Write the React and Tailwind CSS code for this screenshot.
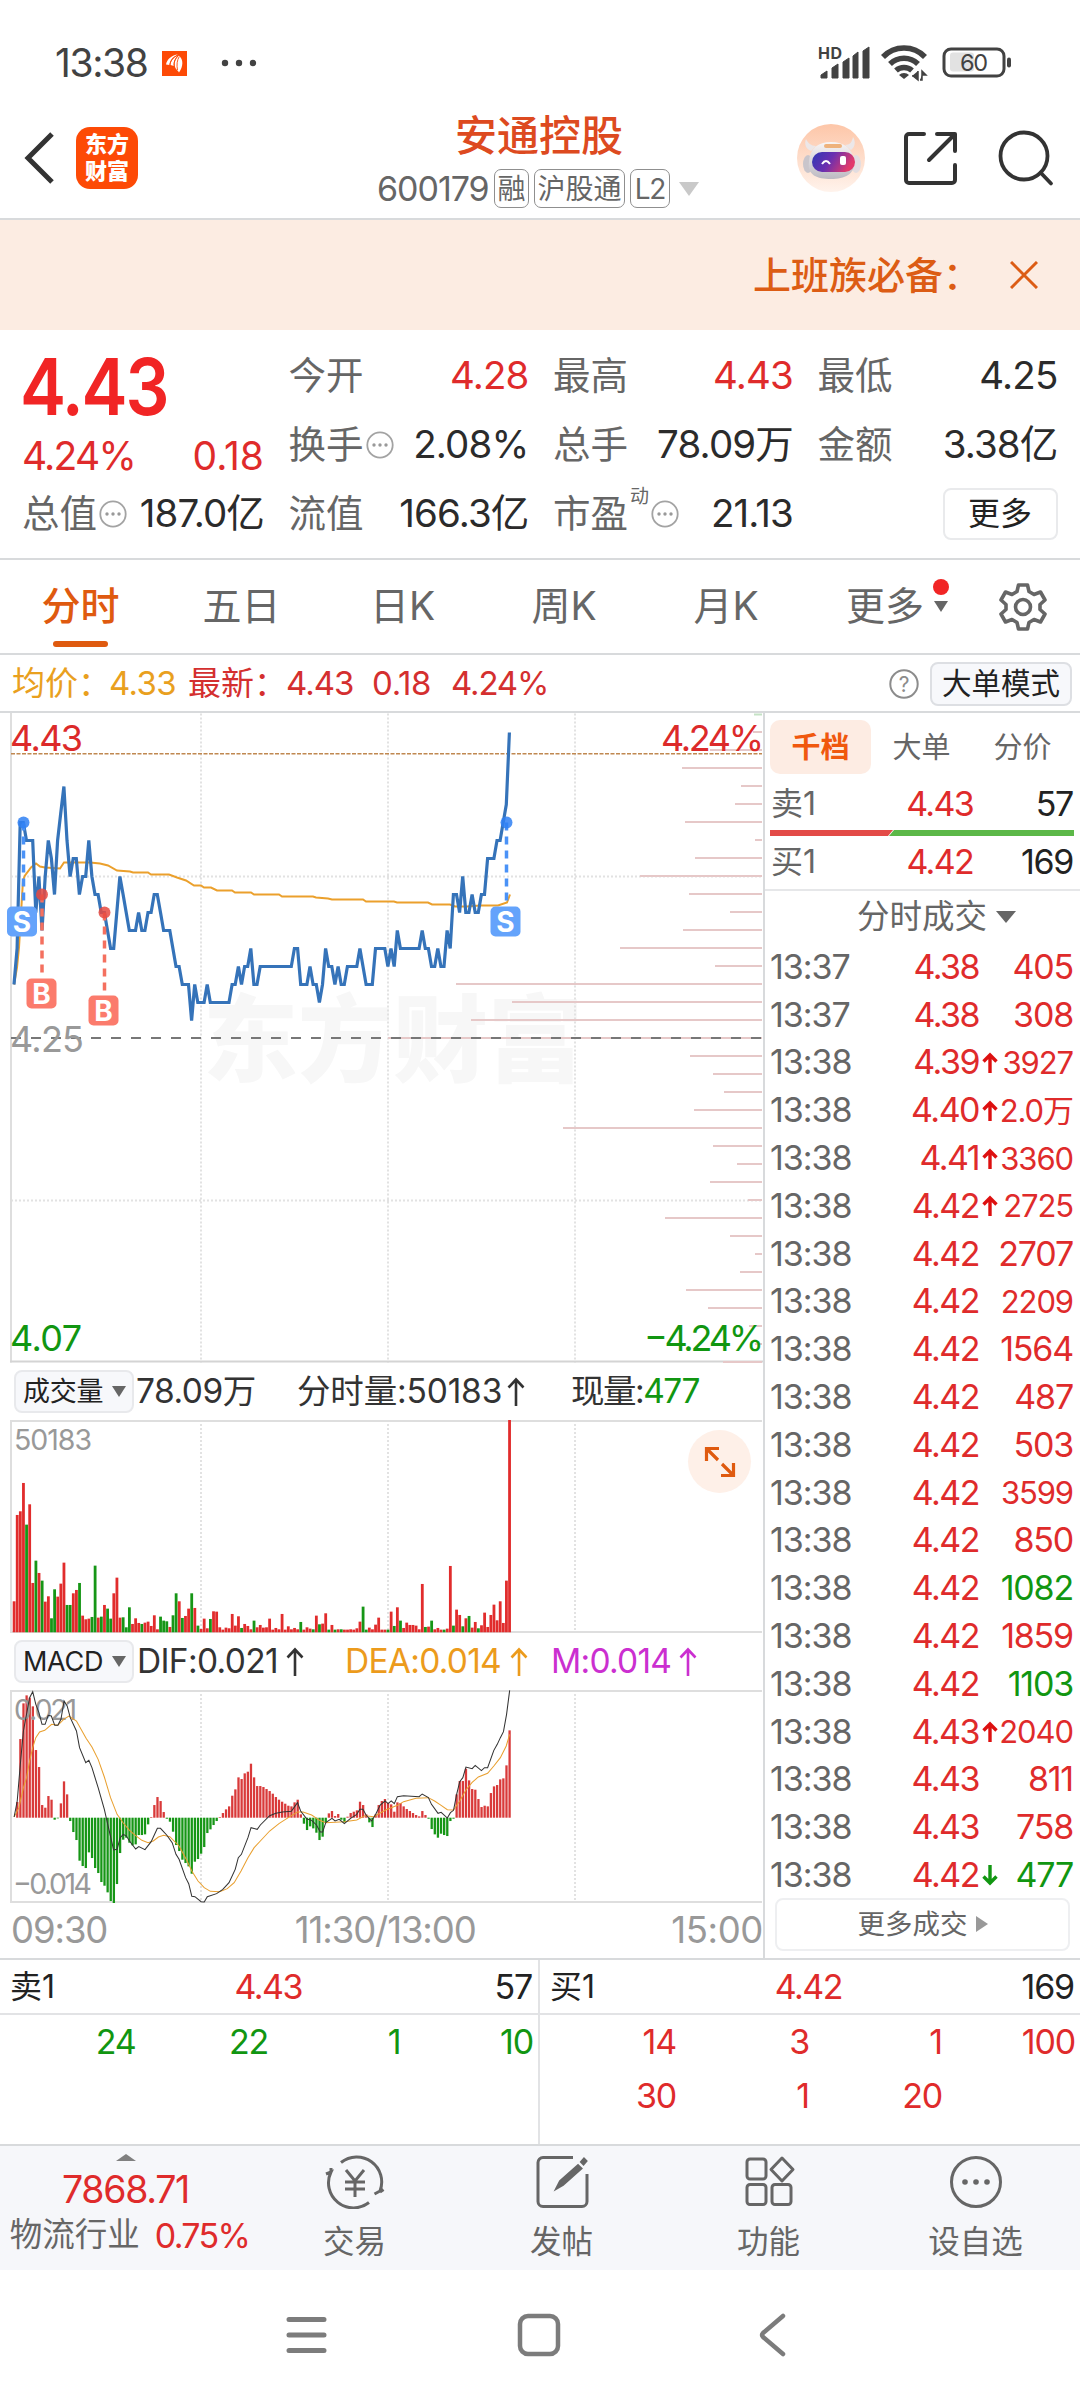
// ticks above 4.25, one per minute
const price = [
  3, 5, 12, 12, 11, 11, 11, 7, 9, 6, 9, 11, 10, 8, 11, 12.5, 14, 11, 9, 10, 10, 8, 9, 9, 11, 9, 8, 8, 7, 7, 6, 5, 5, 7, 9, 8, 7, 6, 6, 6,
  7, 6, 6, 7, 7, 8, 8, 7, 6, 6, 6, 5, 4, 4, 3, 3, 3, 1, 3, 2, 2, 2, 3, 2, 2, 2, 2, 2, 2, 2, 3, 3, 4, 3, 4, 4, 5, 3, 3, 4,
  4, 4, 4, 4, 4, 4, 4, 4, 4, 4, 5, 5, 3, 3, 3, 4, 3, 3, 2, 3, 5, 4, 4, 3, 4, 3, 3, 4, 4, 4, 4, 5, 4, 3, 3, 3, 5, 5, 5, 5,
  4, 5, 4, 6, 5, 5, 5, 5, 5, 5, 5, 6, 5, 5, 4, 4, 5, 4, 4, 6, 5, 8, 8, 7, 9, 7, 7, 8, 7, 7, 8, 8, 10, 10, 10, 11, 11, 13, 17,
];

const average =
  "14,984 17,967 19,947 21,913 23,880 25,875 31,867 36,863 40,866 45,867 60,868 64,862 90,862 100,863 108,865 117,870 130,871 133,872 148,872 151,874 169,874 177,877 186,880 194,885 201,885 204,887 211,887 217,890 232,890 235,892 251,892 254,894 279,894 282,896 313,896 316,897 328,898 332,899 363,899 366,901 394,901 397,902 428,902 432,904 450,904 455,906 467,906 480,905 498,905 507,902 510,894";

// negative = falling minute (green)
const volume = [
  93, 352, 363, 448, -323, 384, 148, -215, 178, -155, 92, 108, -42, -129, 107, 146, 209, -82, -82, 117, 127, -148, 50, 39, 41, -46, -200, 44, -47, 82,
  -71, -41, 117, 164, 44, -45, -15, -75, 25, 42, 28, -25, 29, 32, 19, 51, 9, -47, -35, -33, 16, -51, -117, 93, -43, 49, 71, -117, 73, -20,
  10, 41, 12, -40, 63, 62, 15, 8, 14, 12, 55, 20, 48, -13, 25, 19, 9, -35, 15, 22, 14, 15, 41, 8, 13, 9, 55, 8, 18, 9,
  13, 9, -31, 8, 15, 11, -9, 50, -24, 26, 57, -8, 22, -8, 9, -9, 8, 8, 9, 8, 12, 32, -77, -8, 14, 9, 23, 44, 8, 8,
  -8, 62, -19, 75, -35, 13, 29, 22, 22, 20, 9, 145, -16, 17, -35, 9, 13, 8, -8, 11, 199, -20, 68, 52, -18, 42, -49, 14, 31, -12,
  21, 59, 16, 52, 83, 36, 93, 28, 155, 637,
];

const macd = [
  0, 47, 236, 343, 367, 360, 334, 203, 152, 38, 30, 65, 54, -6, -2, 43, 109, 70, -10, -43, -67, -129, -145, -151, -104, -121, -151, -166, -193, -204,
  -224, -250, -256, -199, -106, -66, -60, -75, -83, -80, -52, -52, -50, -20, 2, 38, 62, 50, 17, -3, -12, -42, -82, -100, -126, -136, -146, -168, -132, -124,
  -108, -88, -46, -35, -22, -10, 2, 14, 25, 34, 66, 85, 121, 116, 133, 138, 162, 121, 95, 95, 92, 86, 80, 72, 62, 54, 48, 42, 36, 34,
  46, 54, 10, -18, -37, -26, -32, -45, -67, -57, -15, 13, 20, 5, 11, -6, -14, 3, 14, 18, 22, 48, 38, 10, -14, -28, 10, 38, 50, 56,
  44, 40, 18, 46, 44, 34, 26, 20, 14, 8, 4, 20, 8, -3, -34, -50, -60, -48, -52, -55, -10, -3, 70, 110, 110, 147, 112, 86, 84, 56,
  32, 36, 34, 74, 94, 98, 115, 118, 157, 262,
];

const dif =
  "41,588 50,540 59,430 68,330 77,280 86,230 95,212 104,250 113,275 122,310 131,310 140,283 149,285 159,313 168,313 177,295 186,240 195,255 204,290 222,330 231,380 249,425 258,418 267,440 285,500 303,565 315,620 330,687 340,685 349,650 358,640 367,645 376,660 394,684 403,677 421,686 439,662 457,622 466,622 484,642 500,665 511,700 520,715 539,770 548,788 557,826 566,827 584,842 593,843 602,827 629,818 647,805 665,785 683,745 692,710 701,700 720,650 729,620 747,625 756,612 783,584 801,577 820,573 846,571 864,545 873,570 891,594 905,598 919,612 930,633 937,633 946,605 964,592 973,600 985,595 1000,608 1018,592 1036,580 1045,565 1054,565 1063,582 1079,600 1091,580 1104,552 1118,540 1127,548 1136,540 1145,548 1154,527 1172,524 1217,527 1226,519 1244,530 1253,550 1272,577 1281,574 1299,591 1308,575 1317,568 1326,520 1335,482 1344,470 1353,438 1371,443 1380,433 1398,449 1407,440 1416,440 1434,388 1444,370 1453,350 1462,332 1471,280 1480,208";
const dea =
  "41,588 55,560 68,500 77,470 86,420 95,380 104,350 115,333 130,328 150,310 168,313 185,295 200,285 222,300 250,352 267,378 285,415 303,468 321,530 340,580 358,606 376,628 394,644 412,658 430,665 445,660 460,648 475,643 493,647 520,675 540,713 557,750 575,780 593,800 611,811 638,812 660,803 680,785 700,750 720,710 738,680 756,660 783,630 810,608 837,590 864,573 880,573 905,582 928,598 946,605 1000,602 1036,597 1060,584 1085,587 1120,567 1154,553 1172,542 1208,532 1244,530 1262,540 1281,553 1299,566 1317,567 1335,540 1353,507 1371,484 1389,468 1416,457 1434,435 1453,410 1470,375 1480,340";

// left ends of the volume-by-price lines, top to bottom
const levels = [
  753, 710, 682, 741, 735, 685, 755, 695, 640, 689, 730, 683, 620, 715, 456, 512, 471, 388, 690, 713, 724, 694, 563, 713, 737, 710, 748, 665, 730, 755, 740, 686, 708, 749, 755, 723,
];

const trades = [
  ["13:37", "4.38", "", "405"],
  ["13:37", "4.38", "", "308"],
  ["13:38", "4.39", "up", "3927", "s"],
  ["13:38", "4.40", "up", "2.0万", "s"],
  ["13:38", "4.41", "up", "3360", "s"],
  ["13:38", "4.42", "up", "2725", "s"],
  ["13:38", "4.42", "", "2707"],
  ["13:38", "4.42", "", "2209", "s"],
  ["13:38", "4.42", "", "1564"],
  ["13:38", "4.42", "", "487"],
  ["13:38", "4.42", "", "503"],
  ["13:38", "4.42", "", "3599", "s"],
  ["13:38", "4.42", "", "850"],
  ["13:38", "4.42", "", "1082", "g"],
  ["13:38", "4.42", "", "1859"],
  ["13:38", "4.42", "", "1103", "g"],
  ["13:38", "4.43", "up", "2040", "s"],
  ["13:38", "4.43", "", "811"],
  ["13:38", "4.43", "", "758"],
  ["13:38", "4.42", "down", "477", "g"],
];

const STEP = 3.116;

function Num({ className = "tracking-[-0.035em]", children }) {
  return <span className={`whitespace-nowrap ${className}`}>{children}</span>;
}

function Arrow({ className = "" }) {
  return (
    <svg className={className} width="18" height="30" viewBox="0 0 18 30" fill="none" stroke="currentColor" strokeWidth="2.6">
      <path d="M9 29V3M1.500 10.500 9 2.500l7.500 8" />
    </svg>
  );
}

function Dots({ className = "" }) {
  return (
    <svg className={className} width="28" height="28" viewBox="0 0 28 28">
      <circle cx="14" cy="14" r="12.700" fill="none" stroke="#a3a3a3" strokeWidth="1.800" />
      <circle cx="8" cy="14" r="1.700" fill="#999" />
      <circle cx="14" cy="14" r="1.700" fill="#999" />
      <circle cx="20" cy="14" r="1.700" fill="#999" />
    </svg>
  );
}

function StatusBar() {
  return (
    <div className="flex h-[110px] items-center pt-4 pl-[55px] text-[#424242]">
      <span className="w-[107px] text-[39px] tracking-[-0.035em]">13:38</span>
      <svg width="25" height="25" viewBox="0 0 25 25">
        <rect width="25" height="25" fill="#fd4a06" />
        <path d="M4 13.500C5 8 10 4 16 3.500 10.500 6 8 9 7.500 14zM8.500 14C9 9 12 6 16 4.500c-3.500 3-5 7-4 10.500zM12.800 15.500C12 11 13.500 7.500 16.800 4.500c5 4 4.500 11 .2 17-.6-2-3.300-3-4.200-6z" fill="#fff" />
        <path d="M7.800 14.500C8 10 11 6.500 16 4M12.300 16C11.500 11.500 13 8 16.500 4.500M15.500 19C14.500 14 15 9 17.300 5.500" fill="none" stroke="#fd4a06" strokeWidth="0.900" />
      </svg>
      <svg className="ml-[34px]" width="36" height="8" viewBox="0 0 36 8" fill="#424242">
        <circle cx="4" cy="4" r="3.200" />
        <circle cx="18" cy="4" r="3.200" />
        <circle cx="32" cy="4" r="3.200" />
      </svg>
      <svg className="ml-[561px] overflow-visible" width="195" height="36" viewBox="0 0 195 36" fill="#424242">
        <text x="0" y="14" fontSize="16" fontWeight="700" textLength="24">HD</text>
        <path d="M3 33v-3l6-4v7zM14 33V23l6-4v14zM25 33V17l6-4v20zM35 33V11l5-4v26zM45 33V6l6-4v31z" stroke="#424242" strokeWidth="1" strokeLinejoin="round" />
        <g fill="none" stroke="#424242" strokeWidth="5.500">
          <path d="M65 12a29 29 0 0 1 42 0" />
          <path d="M72 19a20 20 0 0 1 28 0" />
          <path d="M78 25.500a12 12 0 0 1 16 0" />
        </g>
        <path d="M86 34l-5-4a7 7 0 0 1 10 0z" />
        <path d="M94 31h6v-5M102 35h2v-9l4 4h-4M95 31l5 4v-8" stroke="#424242" strokeWidth="1.500" />
        <rect x="132" y="7.500" width="24" height="19" rx="3" fill="#e2e2e2" />
        <rect x="126" y="4" width="60" height="27" rx="7" fill="none" stroke="#424242" strokeWidth="3" />
        <rect x="189" y="12.500" width="4" height="10" rx="2" />
        <text x="142" y="26" fontSize="23.500" textLength="28">60</text>
      </svg>
    </div>
  );
}

function Header() {
  const badge = "flex h-[39px] items-center justify-center rounded-[7px] border-[1.500px] border-[#8f8f8f] text-[28px]";
  return (
    <div className="flex h-[110px] border-b-2 border-[#d8dadc]">
      <svg className="mt-[21px] ml-[22px]" width="34" height="54" viewBox="0 0 34 54" fill="none" stroke="#333" strokeWidth="5">
        <path d="M30 3 6 27l24 24" />
      </svg>
      <div className="mt-[17px] ml-5 flex h-[62px] w-[62px] flex-col items-center justify-center rounded-[14px] bg-[#fd4a06] text-[22px] leading-[27px] font-black text-white">
        <span>东方</span>
        <span>财富</span>
      </div>
      <div className="ml-[239px] flex w-[322px] flex-col leading-none">
        <div className="h-[59px] pt-[3px] pl-[2px] text-center text-[42px] leading-[46px] font-medium text-[#dd4a20]">安通控股</div>
        <div className="flex items-center text-[#666]">
          <Num className="w-[117px] text-[34px] tracking-[-0.03em]">600179</Num>
          <span className={`${badge} w-[35px]`}>融</span>
          <span className={`${badge} ml-[5px] w-[91px]`}>沪股通</span>
          <span className={`${badge} ml-[5px] w-[40px] tracking-[-0.04em]`}>L2</span>
          <svg className="ml-[9px]" width="20" height="14" viewBox="0 0 20 14">
            <path d="M0 0h20L10 14z" fill="#c9c9c9" />
          </svg>
        </div>
      </div>
      <div className="mt-[14px] ml-[98px] flex h-[68px] items-center">
        <svg width="68" height="68" viewBox="0 0 68 68">
          <defs>
            <linearGradient id="halo" x1="0" y1="0" x2="0" y2="1">
              <stop offset="0" stopColor="#fdc6a8" />
              <stop offset="1" stopColor="#fff3ec" />
            </linearGradient>
            <linearGradient id="visor" x1="0" y1="0" x2="1" y2="0.300">
              <stop offset="0" stopColor="#2f38b5" />
              <stop offset="0.500" stopColor="#6a2fb0" />
              <stop offset="1" stopColor="#e23a6b" />
            </linearGradient>
            <linearGradient id="shell" x1="0" y1="0" x2="0" y2="1">
              <stop offset="0" stopColor="#f8f5f5" />
              <stop offset="1" stopColor="#bdbac2" />
            </linearGradient>
          </defs>
          <circle cx="34" cy="34" r="34" fill="url(#halo)" />
          <path d="M9 15c-2 5 0 10 5 12l5-5c-5 0-8-3-10-7zM56 13c3 5 2 10-2 13l-6-5c5 0 7-3 8-8z" fill="#ece7e8" />
          <ellipse cx="11" cy="40" rx="5" ry="9" fill="#c9c5cb" />
          <ellipse cx="59" cy="40" rx="5" ry="9" fill="#e3dde0" />
          <path d="M34 18c13 0 22 6 23 20 1 12-9 17-23 17S10 51 12 38c1-14 9-20 22-20z" fill="url(#shell)" />
          <rect x="15" y="28" width="43" height="20" rx="10" fill="url(#visor)" />
          <rect x="27" y="20" width="18" height="4" rx="2" fill="#eeb27c" />
          <path d="M25 40q4-6 8 0" fill="none" stroke="#fff" strokeWidth="2" />
          <rect x="43" y="32" width="6" height="9" rx="2" fill="#fff" />
        </svg>
        <svg className="ml-[38px]" width="54" height="54" viewBox="0 0 54 54" fill="none" stroke="#333" strokeWidth="4" strokeLinecap="round" strokeLinejoin="round">
          <path d="M21 3H6a3 3 0 0 0-3 3v43a3 3 0 0 0 3 3h43a3 3 0 0 0 3-3V34M34 3h18v17M50 5 26 29" />
        </svg>
        <svg className="ml-[40px]" width="58" height="58" viewBox="0 0 58 58" fill="none" stroke="#333" strokeWidth="3.800" strokeLinecap="round">
          <circle cx="27" cy="27" r="23.500" />
          <path d="m43.500 43.500 10.500 11" />
        </svg>
      </div>
    </div>
  );
}

function Field({ label, value, red, icon, sup }) {
  return (
    <div className="relative flex h-[69px] items-center text-[37.500px] leading-none text-[#666]">
      {label}
      {sup && <span className="absolute top-[8px] left-[77px] text-[19px]">{sup}</span>}
      {icon && <Dots className={sup ? "ml-[23px]" : "ml-[2px]"} />}
      <Num className={`ml-auto text-[38.500px] tracking-[-0.022em] ${red ? "text-[#df2b2b]" : "text-[#2b2b2b]"}`}>{value}</Num>
    </div>
  );
}

function Quote() {
  return (
    <div className="grid h-[230px] grid-cols-[242px_240px_240px_240px] grid-rows-[69px_69px_69px] gap-x-[24.500px] border-b-2 border-[#d8dadc] pt-[11px] pl-[22px]">
      <div className="row-span-2">
        <div className="-ml-[2px] h-[91px] w-[240px] origin-left scale-x-[0.875] text-[79px] leading-[91px] font-semibold tracking-[-0.03em] text-[#f12525]">4.43</div>
        <div className="flex h-[48px] items-center justify-between text-[39px] text-[#df2b2b]">
          <Num className="tracking-[-0.045em]">4.24%</Num>
          <Num className="tracking-[0em]">0.18</Num>
        </div>
      </div>
      <Field label="今开" value="4.28" red />
      <Field label="最高" value="4.43" red />
      <Field label="最低" value="4.25" />
      <Field label="换手" value="2.08%" icon />
      <Field label="总手" value="78.09万" />
      <Field label="金额" value="3.38亿" />
      <Field label="总值" value="187.0亿" icon />
      <Field label="流值" value="166.3亿" />
      <Field label="市盈" value="21.13" icon sup="动" />
      <div className="flex items-center justify-end">
        <span className="flex h-[52px] w-[115px] items-center justify-center rounded-lg border-2 border-[#e9eaec] text-[32px] text-[#222]">更多</span>
      </div>
    </div>
  );
}

function Tabs() {
  return (
    <div className="flex h-[95px] items-center border-b-2 border-[#d8dadc] text-[39px] text-[#666]">
      <div className="relative w-[161px] text-center font-medium text-[#df5a0f]">
        分时
        <i className="absolute -bottom-[11px] left-[53px] h-[6px] w-[55px] rounded-full bg-[#df5a0f]" />
      </div>
      <div className="w-[161px] text-center">五日</div>
      <div className="w-[161px] text-center">日K</div>
      <div className="w-[162px] text-center">周K</div>
      <div className="w-[162px] text-center">月K</div>
      <div className="relative w-[156px] text-center">
        更多
        <i className="absolute top-[2px] right-[14px] h-4 w-4 rounded-full bg-[#f12525]" />
        <svg className="absolute top-[24px] right-[15px]" width="14" height="11" viewBox="0 0 14 11">
          <path d="M0 0h14L7 11z" fill="#666" />
        </svg>
      </div>
      <svg className="ml-[35px]" width="50" height="50" viewBox="0 0 50 50" fill="none" stroke="#666" strokeWidth="3.600" strokeLinejoin="round">
        <path d="M20.500 3h9l1.500 6.500 5 3 6.500-2.500L47 18l-5 4.500v5l5 4.500-4.500 8-6.500-2.500-5 3L29.500 47h-9L19 40.500l-5-3L7.500 40 3 32l5-4.500v-5L3 18l4.500-8 6.500 2.500 5-3z" />
        <circle cx="25" cy="25" r="7.500" />
      </svg>
    </div>
  );
}

function InfoBar() {
  return (
    <div className="flex h-[58px] items-center border-b-2 border-[#d8dadc] pt-[1px] pl-3 text-[33px] leading-none whitespace-nowrap text-[#d42f2f]">
      <span className="w-[97px] text-[#e9a01e]">均价：</span>
      <Num className="w-[79px] tracking-[-0.02em] text-[#e9a01e]">4.33</Num>
      <span className="w-[98px]">最新：</span>
      <Num className="w-[86px] tracking-[-0.03em]">4.43</Num>
      <Num className="w-[79px] tracking-[-0.01em]">0.18</Num>
      <Num className="w-[438px] tracking-[-0.035em]">4.24%</Num>
      <svg width="30" height="30" viewBox="0 0 30 30">
        <circle cx="15" cy="15" r="13.700" fill="none" stroke="#8c8c8c" strokeWidth="2" />
        <text x="15" y="22.500" fontSize="21" textAnchor="middle" fill="#8c8c8c">?</text>
      </svg>
      <span className="ml-[11px] flex h-[44px] w-[142px] items-center justify-center rounded-lg border-2 border-[#dddfe3] bg-[#f7f8fb] text-[29.500px] text-[#222]">大单模式</span>
    </div>
  );
}

function Marker({ x, y, dotX, dotY, kind }) {
  const color = kind === "S" ? "#4a92f7" : "#f4705f";
  return (
    <g>
      <line x1={dotX} y1={dotY} x2={dotX} y2={y - 16} stroke={color} strokeWidth="3.500" strokeDasharray="8 6" />
      <circle cx={dotX} cy={dotY} r="6" fill={kind === "S" ? "#2f80f3" : "#e8493f"} opacity="0.850" />
      <rect x={x - 15} y={y - 15} width="30" height="30" rx="5" fill={kind === "S" ? "#64a3fb" : "#fb7b6c"} />
      <text x={x} y={y + 10} fontSize="28" fontWeight="700" textAnchor="middle" fill="#fff">{kind}</text>
    </g>
  );
}

function PriceChart() {
  const line = price.map((p, i) => `${(14 + i * STEP + (i > 156 ? STEP : 0)).toFixed(1)},${1038 - 18 * p}`).join(" ");
  return (
    <svg className="block" width="763" height="650" viewBox="0 712.5 763 650">
      <text x="203" y="1074" fontSize="95" fontWeight="900" textLength="380" fill="#f7f7f7">东方财富</text>
      <g stroke="#e2e2e2" strokeWidth="2" strokeDasharray="2 2">
        <path d="M201 713v649M388 713v649M575 713v649M11 876h751M11 1200h751" />
      </g>
      <path d="M11 712v650" stroke="#dedede" strokeWidth="2" />
      <path d="M10 1361h753" stroke="#d4d4d4" strokeWidth="2" />
      {levels.map((x, i) => (
        <line key={i} x1={x} x2="762" y1={731.500 + i * 18} y2={731.500 + i * 18} stroke="#e6c8c8" strokeWidth="2" />
      ))}
      <line x1="754" x2="762" y1="714" y2="714" stroke="#c5e2c5" strokeWidth="2" />
      <path d="M11 753.300h751" stroke="#c08850" strokeWidth="1.500" strokeDasharray="4 1.500" />
      <path d="M11 1037.500h751" stroke="#777" strokeWidth="1.800" strokeDasharray="10 10" />
      <polyline points={average} fill="none" stroke="#eba02c" strokeWidth="2" />
      <polyline points={line} fill="none" stroke="#3573b9" strokeWidth="3.200" />
      <Marker kind="S" x={22} y={921} dotX={23.500} dotY={822} />
      <Marker kind="B" x={41.500} y={993} dotX={42} dotY={894} />
      <Marker kind="B" x={103.500} y={1010} dotX={104.500} dotY={912} />
      <Marker kind="S" x={505.500} y={921} dotX={506.500} dotY={822} />
      <g fontSize="36">
        <text x="10" y="750" textLength="73" fill="#dc2a2a">4.43</text>
        <text x="10" y="1051" textLength="74" fill="#999">4.25</text>
        <text x="10" y="1350.500" textLength="72" fill="#119611">4.07</text>
        <text x="661" y="750" textLength="103" fill="#dc2a2a">4.24%</text>
        <text x="644" y="1350.500" textLength="120" fill="#119611">−4.24%</text>
      </g>
    </svg>
  );
}

function Frame() {
  return (
    <g>
      <path d="M201 0v213M388 0v213M575 0v213" stroke="#e2e2e2" strokeWidth="2" strokeDasharray="2 2" />
      <path d="M762 1H11v211h751" fill="none" stroke="#dedede" strokeWidth="2" />
    </g>
  );
}

function VolumeChart() {
  return (
    <div className="relative">
      <svg className="block" width="763" height="213" viewBox="0 0 763 213">
        <Frame />
        <text x="14" y="29.500" fontSize="28.500" textLength="78" fill="#999">50183</text>
        {volume.map((v, i) => (
          <rect key={i} x={12.700 + i * STEP} y={212.300 - Math.abs(v) / 3} width="2.800" height={Math.abs(v) / 3} fill={v < 0 ? "#169616" : "#e12c2c"} />
        ))}
      </svg>
      <div className="absolute top-[10px] left-[688px] flex h-[63px] w-[63px] items-center justify-center rounded-full bg-[#fef0e8]">
        <svg width="32" height="32" viewBox="0 0 32 32" fill="none" stroke="#df5a0f" strokeWidth="3.200">
          <path d="M15 2.500H2.500V15M3 3l11 11M17 29.500h12.500V17M29 29 18 18" />
        </svg>
      </div>
    </div>
  );
}

function MacdChart() {
  return (
    <svg className="block" width="763" height="213" viewBox="0 0 763 213">
      <Frame />
      {macd.map((v, i) => (
        <rect key={i} x={13 + i * STEP} y={v > 0 ? 127.700 - v / 3 : 127.700} width="2.300" height={Math.abs(v) / 3} fill={v < 0 ? "#169616" : "#d93a3a"} />
      ))}
      <g fontSize="28.500" fill="#999">
        <text x="14" y="29.500" textLength="63">0.021</text>
        <text x="13" y="204" textLength="79">−0.014</text>
      </g>
      <g transform="translate(0 -69) scale(0.34437 0.33333)" fill="none">
        <polyline points={dea} stroke="#e9a030" strokeWidth="3" />
        <polyline points={dif} stroke="#333" strokeWidth="3" />
      </g>
    </svg>
  );
}

function Picker({ children }) {
  return (
    <span className="ml-[14px] flex h-[43px] w-[120px] items-center rounded-lg border-2 border-[#e8e9ec] bg-[#f7f8fb] pl-[7px] text-[27px] text-[#222]">
      <span className="w-[89px] tracking-[-0.01em]">{children}</span>
      <svg width="14" height="11" viewBox="0 0 14 11">
        <path d="M0 0h14L7 11z" fill="#666" />
      </svg>
    </span>
  );
}

function Charts() {
  return (
    <div className="w-[763px] leading-none whitespace-nowrap">
      <PriceChart />
      <div className="flex h-[57px] items-center text-[33.500px] text-[#333]">
        <Picker>成交量</Picker>
        <Num className="ml-[2px] w-[161px] tracking-[-0.015em]">78.09万</Num>
        <Num className="w-[210px] tracking-[-0.005em]">分时量:50183</Num>
        <Arrow />
        <Num className="ml-[46px] tracking-[-0.045em]">
          现量:<span className="text-[#119611]">477</span>
        </Num>
      </div>
      <VolumeChart />
      <div className="flex h-[57px] items-center text-[33.500px] text-[#333]">
        <Picker>MACD</Picker>
        <Num className="ml-[3px] w-[149px] tracking-[-0.02em]">DIF:0.021</Num>
        <Arrow />
        <Num className="ml-[41px] w-[165px] tracking-[-0.022em] text-[#ec9b1c]">DEA:0.014</Num>
        <Arrow className="text-[#ec9b1c]" />
        <Num className="ml-[23px] w-[128px] tracking-[-0.022em] text-[#cb2fd0]">M:0.014</Num>
        <Arrow className="text-[#cb2fd0]" />
      </div>
      <MacdChart />
      <div className="flex h-[54px] items-center text-[36.500px] text-[#999]">
        <Num className="w-[296px] pl-[11px] tracking-[-0.03em]">09:30</Num>
        <Num className="w-[378px] tracking-[-0.03em]">11:30/13:00</Num>
        <Num className="tracking-[-0.01em]">15:00</Num>
      </div>
    </div>
  );
}

function BookRow({ side, value, count }) {
  return (
    <div className="flex h-[52px] items-center text-[34px] text-[#222]">
      <span className="w-[110px] text-[32px] text-[#666]">{side}</span>
      <Num className="w-[92px] text-right tracking-[-0.05em] text-[#df2b2b]">{value}</Num>
      <Num className="ml-auto tracking-[-0.04em]">{count}</Num>
    </div>
  );
}

function OrderBook() {
  return (
    <div className="w-[317px] border-l-2 border-[#d8dadc] leading-none whitespace-nowrap">
      <div className="mt-[7px] ml-[5px] flex h-[54px] items-center text-[29px] text-[#666]">
        <span className="flex h-[54px] w-[101px] items-center justify-center rounded-[10px] bg-[#fdece3] font-bold text-[#f0580e]">千档</span>
        <span className="w-[101px] text-center">大单</span>
        <span className="w-[101px] text-center">分价</span>
      </div>
      <div className="pt-[4px] pr-[7px] pl-[6px]">
        <BookRow side="卖1" value="4.43" count="57" />
        <svg className="-ml-px block" width="304" height="6" viewBox="0 0 304 6">
          <path d="M0 0h123l-5 6H0z" fill="#e34b47" />
          <path d="M124 0h180v6H119z" fill="#5cb848" />
        </svg>
        <BookRow side="买1" value="4.42" count="169" />
      </div>
      <div className="mt-[1px] flex h-[54px] items-center border-t-2 border-[#e6e7e9] pl-[92px] text-[32.500px] text-[#666]">
        分时成交
        <svg className="ml-[9px]" width="20" height="12" viewBox="0 0 20 12">
          <path d="M0 0h20L10 12z" fill="#666" />
        </svg>
      </div>
      {trades.map(([time, p, dir, count, flag], i) => (
        <div key={i} className="flex h-[47.800px] items-center pl-[5px] text-[34px] text-[#df2b2b]">
          <Num className="w-[110px] shrink-0 tracking-[-0.03em] text-[#666]">{time}</Num>
          <Num className="w-[99px] shrink-0 text-right tracking-[-0.045em]">{p}</Num>
          <span className="flex w-[22px] shrink-0 justify-center">
            {dir && (
              <svg className={dir === "down" ? "rotate-180 text-[#119611]" : "text-[#dd1010]"} width="16" height="21" viewBox="0 0 16 21" fill="none" stroke="currentColor" strokeWidth="3.400">
                <path d="M8 21V3M1.500 9.500 8 3l6.500 6.500" />
              </svg>
            )}
          </span>
          <span className="flex w-[72px] shrink-0 justify-end">
            <Num className={`${flag === "s" ? "text-[31px] tracking-[-0.035em]" : "tracking-[-0.035em]"} ${flag === "g" ? "text-[#119611]" : ""}`}>{count}</Num>
          </span>
        </div>
      ))}
      <div className="-mt-px ml-[10px] flex h-[53px] w-[295px] items-center justify-center rounded-lg border-2 border-[#eeeff1] text-[27.500px] text-[#666]">
        更多成交
        <svg className="ml-[8px]" width="12" height="16" viewBox="0 0 12 16">
          <path d="M0 0v16l12-8z" fill="#999" />
        </svg>
      </div>
    </div>
  );
}

function Queue({ side, value, count, rows, color, className = "" }) {
  return (
    <div className={`w-[540px] ${className}`}>
      <div className="flex h-[55px] items-center border-b-2 border-[#e2e3e5] pr-[6px] pl-[10px] text-[#222]">
        <span className="w-[120px] text-[32px]">{side}</span>
        <Num className="w-[172px] text-right tracking-[-0.045em] text-[#df2b2b]">{value}</Num>
        <Num className="ml-auto tracking-[-0.035em]">{count}</Num>
      </div>
      {rows.map((row, i) => (
        <div key={i} className={`grid h-[54px] grid-cols-4 pr-[5px] pl-[3px] leading-[54px] ${color}`}>
          {row.map((n, j) => (
            <Num key={j} className="text-right tracking-[-0.035em]">{n}</Num>
          ))}
        </div>
      ))}
    </div>
  );
}

function Queues() {
  return (
    <div className="flex h-[188px] border-y-2 border-[#d8dadc] text-[34px] leading-none">
      <Queue side="卖1" value="4.43" count="57" rows={[[24, 22, 1, 10]]} color="text-[#119611]" className="border-r-2 border-[#e2e3e5]" />
      <Queue side="买1" value="4.42" count="169" rows={[[14, 3, 1, 100], [30, 1, 20]]} color="text-[#df2b2b]" />
    </div>
  );
}

function NavItem({ label, children }) {
  return (
    <div className="flex w-[207px] flex-col items-center pt-[9px]">
      <svg width="60" height="54" viewBox="0 0 60 54" fill="none" stroke="#666" strokeWidth="3">
        {children}
      </svg>
      <span className="mt-[17px] text-[31.500px]">{label}</span>
    </div>
  );
}

function BottomNav() {
  return (
    <div className="flex h-[124px] bg-[#f6f7fa] leading-none text-[#666]">
      <div className="flex w-[251px] flex-col items-center pt-[8px]">
        <svg width="20" height="7" viewBox="0 0 20 7">
          <path d="M0 7h20L10 0z" fill="#808080" />
        </svg>
        <Num className="mt-[10px] text-[37.500px] tracking-[-0.035em] text-[#df2b2b]">7868.71</Num>
        <div className="mt-[10px] flex items-center pl-2 text-[32.500px] whitespace-nowrap">
          物流行业<Num className="ml-[15px] text-[34px] tracking-[-0.05em] text-[#df2b2b]">0.75%</Num>
        </div>
      </div>
      <NavItem label="交易">
        <path d="M16 7.500A25 25 0 0 1 55 36l-5.500 3M55 37l3.500-2.500M44 47.500A25 25 0 0 1 6 17L1 19M6 16v-3" />
        <path d="m21 15 9 11 9-11M30 26v16M20 27h20M20 34h20" />
      </NavItem>
      <NavItem label="发帖">
        <path d="M41 2.500H11a5 5 0 0 0-5 5v39a5 5 0 0 0 5 5h39a5 5 0 0 0 5-5V19" />
        <path d="m24 34 4-8 18-16 3.500 3.500L31 30zM49 7l3-3.500 2.500 2.500-3 3.500z" fill="#666" strokeWidth="2" />
      </NavItem>
      <NavItem label="功能">
        <rect x="8" y="4" width="19" height="20" rx="3" />
        <rect x="8" y="29.500" width="19" height="20" rx="3" />
        <rect x="33" y="29.500" width="19" height="20" rx="3" />
        <path d="m43 3 11 11.500L43 26 32 14.500z" strokeLinejoin="round" />
      </NavItem>
      <NavItem label="设自选">
        <circle cx="30" cy="27" r="24.500" />
        <g fill="#666" stroke="none">
          <circle cx="19" cy="27" r="2.800" />
          <circle cx="30" cy="27" r="2.800" />
          <circle cx="41" cy="27" r="2.800" />
        </g>
      </NavItem>
    </div>
  );
}

function SystemNav() {
  return (
    <div className="flex h-[130px] items-center pl-[286px]">
      <svg width="41" height="40" viewBox="0 0 41 40" stroke="#7c7c7c" strokeWidth="5" strokeLinecap="round">
        <path d="M3 4.500h35M3 20h35M3 35.500h35" />
      </svg>
      <svg className="ml-[190px]" width="44" height="44" viewBox="0 0 44 44" fill="none" stroke="#7c7c7c" strokeWidth="4.500">
        <rect x="3" y="3" width="38" height="38" rx="8" />
      </svg>
      <svg className="ml-[197px]" width="30" height="44" viewBox="0 0 30 44" fill="none" stroke="#7c7c7c" strokeWidth="4.500" strokeLinecap="round" strokeLinejoin="round">
        <path d="M25 3 5 20q-2 2 0 4l20 17" />
      </svg>
    </div>
  );
}

function App() {
  return (
    <div className="h-[2400px] w-[1080px] overflow-hidden bg-white font-['Inter','Noto_Sans_CJK_SC',sans-serif]">
      <StatusBar />
      <Header />
      <div className="flex h-[110px] items-center bg-[#fcece2] pl-[753px] text-[38px] font-medium text-[#dc5c14]">
        <span className="w-[257px]">上班族必备：</span>
        <svg width="28" height="28" viewBox="0 0 28 28" stroke="#dc5c14" strokeWidth="3">
          <path d="m1 1 26 26M27 1 1 27" />
        </svg>
      </div>
      <Quote />
      <Tabs />
      <InfoBar />
      <div className="flex h-[1245px]">
        <Charts />
        <OrderBook />
      </div>
      <Queues />
      <BottomNav />
      <SystemNav />
    </div>
  );
}

export default App;
